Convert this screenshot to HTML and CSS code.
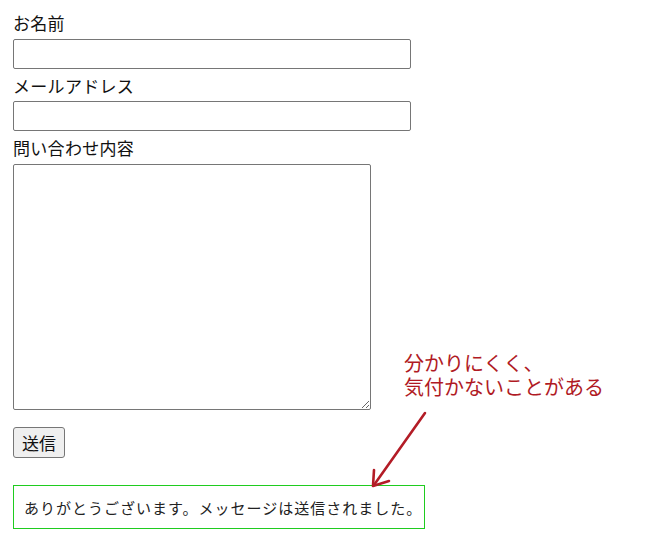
FILE: index.html
```html
<!DOCTYPE html>
<html lang="ja">
<head>
<meta charset="utf-8">
<title>お問い合わせ</title>
<link rel="stylesheet" href="styles.css">
</head>
<body>
<div class="page">
  <form class="form">
    <label class="label" for="name">お名前</label>
    <input class="input" id="name" type="text">
    <label class="label" for="email">メールアドレス</label>
    <input class="input" id="email" type="text">
    <label class="label" for="msg">問い合わせ内容</label>
    <textarea class="textarea" id="msg"></textarea>
    <button class="submit" type="button">送信</button>
  </form>
  <div class="notice">ありがとうございます。メッセージは送信されました。</div>
  <div class="annotation">分かりにくく、<br>気付かないことがある</div>
  <svg class="arrow" width="70" height="90" viewBox="0 0 70 90">
    <path d="M63 3 L12 75" stroke="#b31c26" stroke-width="2.6" stroke-linecap="round" fill="none"/>
    <path d="M12 60 L11 76 L27 71" stroke="#b31c26" stroke-width="2.6" stroke-linecap="round" stroke-linejoin="round" fill="none"/>
  </svg>
</div>
</body>
</html>
```
FILE: styles.css
```css
html, body {
  margin: 0;
  padding: 0;
  background: #ffffff;
}
body {
  font-family: "Noto Sans CJK JP", "Noto Sans", sans-serif;
  color: #111111;
}
.page {
  position: relative;
  width: 668px;
  height: 551px;
  padding: 12px 13px 0;
  box-sizing: border-box;
}
.form {
  display: flex;
  flex-direction: column;
  align-items: flex-start;
}
.label {
  display: block;
  font-size: 17px;
  letter-spacing: 0.3px;
  line-height: 22.7px;
  margin-bottom: 4px;
}
.input {
  display: block;
  box-sizing: border-box;
  width: 398px;
  height: 30px;
  margin: 0 0 6px;
  border: 1px solid #767676;
  border-radius: 2px;
  padding: 2px 4px;
  font-size: 16px;
  background: #fff;
}
.textarea {
  display: block;
  box-sizing: border-box;
  width: 358px;
  height: 246px;
  margin: 0;
  border: 1px solid #767676;
  border-radius: 2px;
  padding: 2px;
  font-size: 14px;
  background: #fff;
}
.submit {
  display: block;
  box-sizing: border-box;
  margin-top: 17px;
  width: 52px;
  height: 31px;
  padding: 0;
  border: 1px solid #767676;
  border-radius: 3px;
  background: #efefef;
  font-family: "Noto Sans CJK JP", sans-serif;
  font-size: 17px;
  line-height: 22px;
  color: #111;
}
.notice {
  box-sizing: border-box;
  margin-top: 27px;
  width: 412px;
  height: 44px;
  border: 1px solid #1fcc1f;
  padding: 0 10px;
  display: flex;
  align-items: center;
  font-size: 15px;
  letter-spacing: 1px;
  color: #222222;
  white-space: nowrap;
}
.annotation {
  position: absolute;
  left: 404px;
  top: 351px;
  font-size: 20px;
  line-height: 24px;
  color: #b01a24;
}
.arrow {
  position: absolute;
  left: 362px;
  top: 410px;
}
```
